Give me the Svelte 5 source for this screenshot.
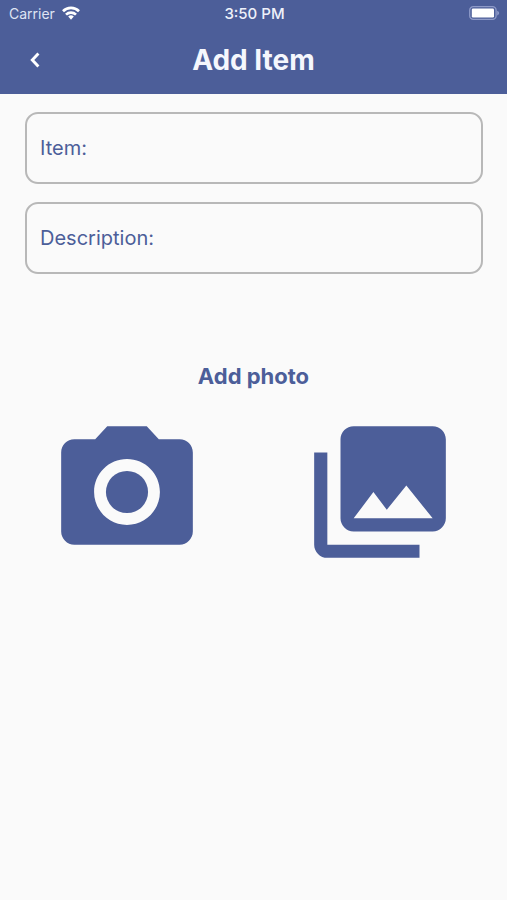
<script>
  let item = $state('');
  let description = $state('');
</script>

<div class="screen">
  <header>
    <div class="status">
      <div class="carrier">
        <span>Carrier</span>
        <svg class="wifi" viewBox="0 0 18 14" width="18" height="14" aria-hidden="true">
          <g fill="none" stroke="currentColor" stroke-width="2.7">
            <path d="M1 5.2a11.5 11.5 0 0 1 16 0" />
            <path d="M4 8.6a7.2 7.2 0 0 1 10 0" />
          </g>
          <path d="M6.2 10.6a4.2 4.2 0 0 1 5.6 0L9 13.8z" fill="currentColor" />
        </svg>
      </div>
      <time>3:50 PM</time>
      <div class="power">
        <svg viewBox="0 0 31 14" width="31" height="14" aria-hidden="true">
          <rect x="0.7" y="0.7" width="26.4" height="12.6" rx="3.6" fill="none" stroke="#8e9ac8" stroke-width="1.3" />
          <rect x="2.8" y="2.6" width="22.2" height="8.8" rx="1.2" fill="#fff" />
          <path d="M28.2 4.8c2.6 1 2.6 3.6 0 4.6z" fill="#8e9ac8" />
        </svg>
      </div>
    </div>
    <div class="bar">
      <button class="back" aria-label="Back">
        <svg viewBox="0 0 10 16" width="10" height="16">
          <path d="M8.4 1.6 2.3 8l6.1 6.4" fill="none" stroke="currentColor" stroke-width="2.9" />
        </svg>
      </button>
      <h1>Add Item</h1>
    </div>
  </header>

  <main>
    <form>
      <div class="field">
        <label for="item">Item:</label>
        <input id="item" type="text" bind:value={item} />
      </div>
      <div class="field">
        <label for="description">Description:</label>
        <input id="description" type="text" bind:value={description} />
      </div>
    </form>

    <h2>Add photo</h2>
    <div class="sources">
      <button aria-label="Take a photo">
        <svg viewBox="0 0 24 24" width="158" height="158" fill="currentColor">
          <circle cx="12" cy="12" r="3.2" />
          <path d="M9 2 7.17 4H4c-1.1 0-2 .9-2 2v12c0 1.1.9 2 2 2h16c1.1 0 2-.9 2-2V6c0-1.1-.9-2-2-2h-3.17L15 2H9zm3 15c-2.76 0-5-2.24-5-5s2.24-5 5-5 5 2.24 5 5-2.24 5-5 5z" />
        </svg>
      </button>
      <button aria-label="Choose from gallery">
        <svg viewBox="0 0 24 24" width="158" height="158" fill="currentColor">
          <path d="M22 16V4c0-1.1-.9-2-2-2H8c-1.1 0-2 .9-2 2v12c0 1.1.9 2 2 2h12c1.1 0 2-.9 2-2zm-11-4 2.03 2.71L16 11l4 5H8l3-4zM2 6v14c0 1.1.9 2 2 2h14v-2H4V6H2z" />
        </svg>
      </button>
    </div>
  </main>
</div>

<style>
  :global(body) {
    margin: 0;
    background: #fafafa;
  }

  .screen {
    min-height: 100vh;
    font-family: Inter, 'Liberation Sans', sans-serif;
    color: #4c5e99;
  }

  header {
    background: #4c5e99;
    color: #fff;
  }

  .status {
    display: grid;
    grid-template-columns: 1fr auto 1fr;
    align-items: center;
    height: 26px;
    padding: 0 7px 0 9px;
    font-size: 14px;
  }

  .carrier {
    display: flex;
    align-items: center;
    gap: 7px;
  }

  .carrier span {
    color: #dfe4f3;
  }

  time {
    color: #eef1fa;
    font-size: 15px;
    font-weight: 500;
  }

  .power {
    display: flex;
    justify-content: flex-end;
  }

  .bar {
    display: grid;
    grid-template-columns: 70px 1fr 70px;
    align-items: center;
    height: 68px;
  }

  button {
    display: flex;
    align-items: center;
    justify-content: center;
    padding: 0;
    border: none;
    background: none;
    color: inherit;
    cursor: pointer;
  }

  .back {
    height: 68px;
  }

  h1 {
    margin: 0;
    font-size: 28px;
    line-height: 32px;
    font-weight: 700;
    text-align: center;
    color: #f5f7fd;
  }

  form {
    display: flex;
    flex-direction: column;
    gap: 18px;
    padding: 18px 24px 0 25px;
  }

  .field {
    display: flex;
    align-items: center;
    gap: 8px;
    box-sizing: border-box;
    height: 72px;
    padding: 0 13px;
    border: 2px solid #b8b8b8;
    border-radius: 13px;
    font-size: 20px;
  }

  input {
    flex: 1;
    min-width: 0;
    padding: 0;
    border: none;
    outline: none;
    background: none;
    font: inherit;
    color: inherit;
  }

  h2 {
    margin: 86px 0 0;
    font-size: 22px;
    line-height: 32px;
    font-weight: 700;
    text-align: center;
  }

  .sources {
    display: grid;
    grid-template-columns: 1fr 1fr;
    margin-top: 21px;
  }
</style>
